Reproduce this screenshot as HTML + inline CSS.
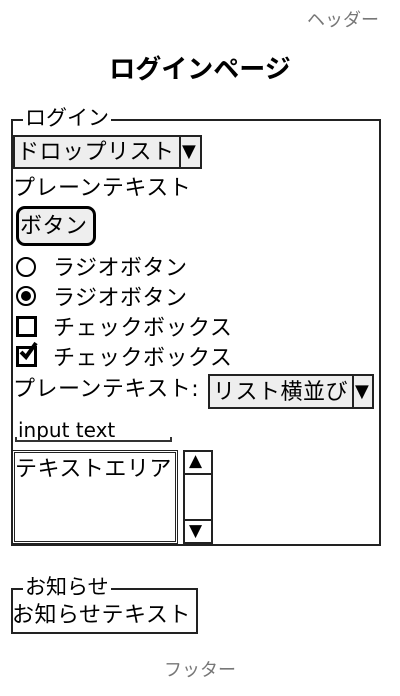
<!DOCTYPE html>
<html><head><meta charset="utf-8"><style>
body{margin:0;width:400px;height:696px;background:#fff;position:relative;font-family:"DejaVu Sans","Noto Sans CJK JP",sans-serif;color:#000;overflow:hidden}
.a{position:absolute;white-space:nowrap;line-height:1}
.t{font-size:22px;letter-spacing:0.5px}
.box{position:absolute;border:2px solid #222;box-sizing:border-box}
</style></head><body>
<div class="a" style="left:307px;top:12px;font-size:18px;color:#777">ヘッダー</div>
<div class="a" style="left:0;width:400px;text-align:center;top:57px;font-size:26px;font-weight:bold">ログインページ</div>

<div class="box" style="left:11px;top:119px;width:370px;height:427px"></div>
<div class="a" style="left:23px;top:108px;background:#fff;padding:0 2px;font-size:21px">ログイン</div>

<div class="box" style="left:13px;top:135px;width:189px;height:34px;background:#eee"></div>
<div class="box" style="left:179px;top:135px;width:23px;height:34px;background:#eee"></div>
<div class="a t" style="left:17px;top:142px">ドロップリスト</div>
<div class="a" style="left:182px;top:143px;font-size:18px">▼</div>

<div class="a t" style="left:13px;top:178px">プレーンテキスト</div>

<div class="box" style="left:16px;top:206px;width:80px;height:40px;border:3px solid #000;border-radius:9px;background:#eee"></div>
<div class="a t" style="left:20px;top:216px">ボタン</div>

<div class="a" style="left:16px;top:257px;width:16px;height:16px;border:2px solid #000;border-radius:50%"></div>
<div class="a t" style="left:53px;top:258px">ラジオボタン</div>
<div class="a" style="left:16px;top:286px;width:16px;height:16px;border:2px solid #000;border-radius:50%"></div>
<div class="a" style="left:21px;top:291px;width:10px;height:10px;background:#000;border-radius:50%"></div>
<div class="a t" style="left:53px;top:288px">ラジオボタン</div>

<div class="a" style="left:16px;top:316px;width:15px;height:15px;border:3px solid #000"></div>
<div class="a t" style="left:53px;top:318px">チェックボックス</div>
<div class="a" style="left:16px;top:346px;width:15px;height:15px;border:3px solid #000"></div>
<svg class="a" style="left:18px;top:340px" width="22" height="22"><path d="M3 12 L8 17 L18 3" stroke="#000" stroke-width="4" fill="none"/></svg>
<div class="a t" style="left:53px;top:348px">チェックボックス</div>

<div class="a t" style="left:13px;top:379px">プレーンテキスト:</div>
<div class="box" style="left:208px;top:374px;width:166px;height:35px;background:#eee"></div>
<div class="box" style="left:352px;top:374px;width:22px;height:35px;background:#eee"></div>
<div class="a t" style="left:213px;top:382px">リスト横並び</div>
<div class="a" style="left:355px;top:383px;font-size:18px">▼</div>

<div class="a" style="left:18px;top:420px;font-size:20px">input text</div>
<div class="a" style="left:15px;top:437px;width:157px;height:5px;border:2px solid #333;border-top:none;box-sizing:border-box"></div>

<div class="box" style="left:12px;top:450px;width:166px;height:94px;border:3px double #222"></div>
<div class="a t" style="left:15px;top:459px">テキストエリア</div>
<div class="box" style="left:183px;top:450px;width:30px;height:94px"></div>
<div class="box" style="left:183px;top:450px;width:30px;height:25px"></div>
<div class="box" style="left:183px;top:519px;width:30px;height:25px"></div>
<div class="a" style="left:189px;top:453px;font-size:17px">▲</div>
<div class="a" style="left:189px;top:523px;font-size:17px">▼</div>

<div class="box" style="left:11px;top:588px;width:187px;height:46px"></div>
<div class="a" style="left:23px;top:577px;background:#fff;padding:0 2px;font-size:21px">お知らせ</div>
<div class="a t" style="left:12px;top:605px">お知らせテキスト</div>

<div class="a" style="left:0;width:400px;text-align:center;top:662px;font-size:18px;color:#777">フッター</div>
</body></html>
